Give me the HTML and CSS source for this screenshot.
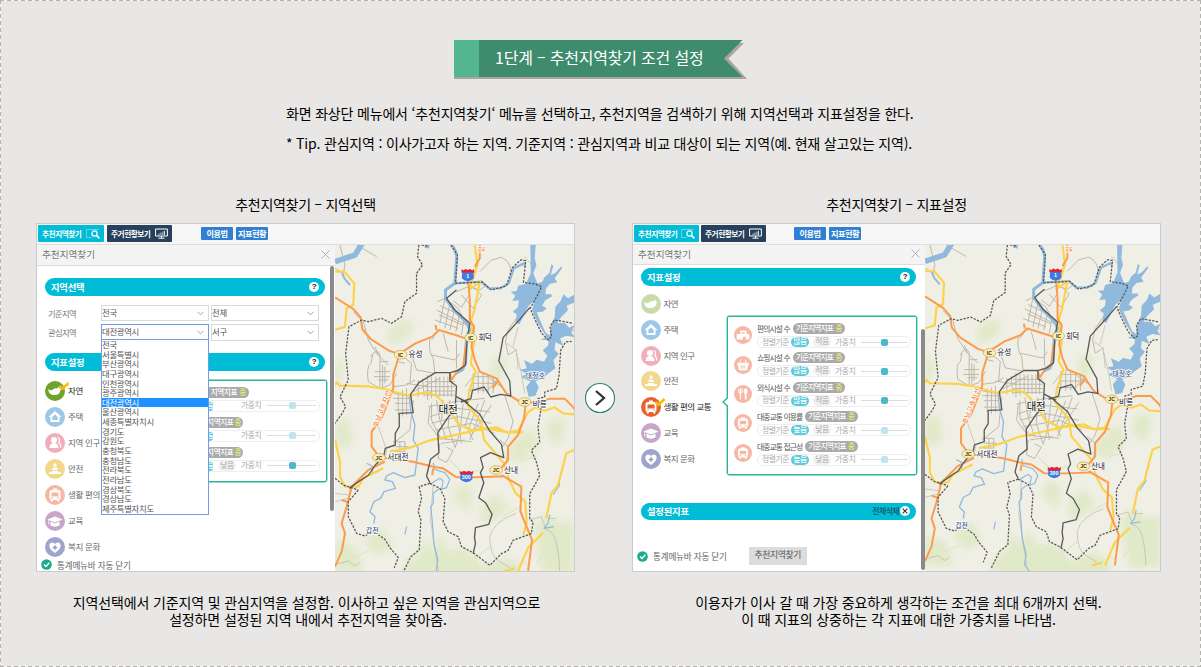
FILE: index.html
```html
<!DOCTYPE html>
<html lang="ko">
<head>
<meta charset="utf-8">
<title>추천지역찾기 조건 설정</title>
<link rel="stylesheet" href="styles.css">
</head>
<body>
<svg class="defs" width="0" height="0" aria-hidden="true">
  <defs>
    <filter id="soft" x="-20%" y="-20%" width="140%" height="140%"><feGaussianBlur stdDeviation="12"/></filter>
    <symbol id="nature" viewBox="0 0 20 20"><path d="M3.500 8c1.500 1.500 3 1.700 4.500.5C9 7.500 10.500 7 12 7.500l2.300-2.200.2 2.200 2.300.5-1.500 1.200c-.3 3.300-2.800 4.800-5.800 4.800C6 14 3 12 3.500 8z" fill="#fff"/></symbol>
    <symbol id="home" viewBox="0 0 20 20"><path d="M10 4l6.500 6h-2v5h-9v-5h-2z" fill="#fff"/><path d="M7.300 10L10 7.500l2.700 2.500v3H7.300z" fill="#9cc7e6"/></symbol>
    <symbol id="people" viewBox="0 0 20 20"><circle cx="9" cy="7" r="3" fill="#fff"/><path d="M4.500 15c0-3 1.500-5 4.500-5s4.500 2 4.500 5z" fill="#fff"/><path d="M12.500 4.500c3 .5 2 4 1.200 5 1.800 1 2 3 2 5" fill="none" stroke="#fff" stroke-width="1.200"/></symbol>
    <symbol id="safe" viewBox="0 0 20 20"><path d="M9 4.500h2l.8 3H8.200zM7.900 8.500h4.200l.7 2.500H7.200zM6.900 12h6.200l.3 1.300H16V15H4v-1.700h2.600z" fill="#fff"/></symbol>
    <symbol id="bus" viewBox="0 0 20 20"><path d="M6 5h8l1.500 1.500v7L14 15l.5 1.500h-2L12 15H8l-.5 1.500h-2L6 15l-1.500-1.500v-7zM6.500 7.500v4h7v-4zM8 3.500h4V5H8z" fill="#fff" fill-rule="evenodd"/><path d="M6 13h2M12 13h2" stroke="#f2a58c" stroke-width="1"/></symbol>
    <symbol id="edu" viewBox="0 0 20 20"><path d="M2.500 8.500L10 5.500l7.500 3L10 11.500z" fill="#fff"/><path d="M5.500 10.500v4c3 1.500 6 1.500 9 0v-4L10 12.500z" fill="#fff"/><path d="M3.800 9v4.500" stroke="#fff" stroke-width=".8"/></symbol>
    <symbol id="welfare" viewBox="0 0 20 20"><path d="M10 16C2 11 4 5.500 7 5.500c1.500 0 2.500.8 3 1.800.5-1 1.500-1.800 3-1.800 3 0 5 5.500-3 10.500z" fill="#fff"/><path d="M10 8.300v4.400M7.800 10.500h4.400" stroke="#8f93c6" stroke-width="1.300"/></symbol>
    <symbol id="store" viewBox="0 0 20 20"><path d="M3 9h4V5h7v4h3v6h-4v-3h-3v3H3zM8.500 7v1.500H12V7z" fill="#fff" fill-rule="evenodd"/></symbol>
    <symbol id="basket" viewBox="0 0 20 20"><path d="M4 8h12v1.800h-.7L14 15.500H6L4.700 9.800H4zM6 8l2-4M14 8l-2-4" fill="#fff" stroke="#fff"/><path d="M8 10.500V14M10 10.500V14M12 10.500V14" stroke="#f6b8a4"/></symbol>
    <symbol id="food" viewBox="0 0 20 20"><path d="M5.500 4v4.500M7.200 4v12M9 4v4.500M5.500 8.500H9" stroke="#fff" stroke-width="1.200" fill="none"/><path d="M13 3.500c2.500.5 2.500 5 .8 6.500V16h-1.800V10c-1.500-1.500-1.500-6 1-6.500z" fill="#fff"/></symbol>
    <symbol id="mark" viewBox="0 0 12 10"><path d="M1.500 3.800l3 3L10.500 1" fill="none" stroke="#fdbb05" stroke-width="2.600"/></symbol>
    <symbol id="ok" viewBox="0 0 11 11"><circle cx="5.500" cy="5.500" r="5.300" fill="#1dab8a"/><path d="M3 5.400l2 2 3.300-3.600" fill="none" stroke="#fff" stroke-width="1.400"/></symbol>
    <symbol id="find" viewBox="0 0 14 11"><path d="M5.500 9.500h-5v-8h12" fill="none" stroke="#b9eef6" stroke-width="1" stroke-dasharray="1 1"/><circle cx="8.500" cy="5.500" r="2.600" fill="none" stroke="#fff" stroke-width="1.200"/><path d="M10.400 7.400l3 3" stroke="#fff" stroke-width="1.500"/></symbol>
    <symbol id="monitor" viewBox="0 0 13 11"><path d="M.6 1h11.800v7H.6zM6.500 8v2M3.500 10.200h6" fill="none" stroke="#fff" stroke-width="1"/><path d="M4 7V5.500M6 7V4.500M8 7V3.500M9.500 7V2.800" stroke="#fff" stroke-width=".8"/></symbol>
    <symbol id="terrain" viewBox="15 15 718 1000" preserveAspectRatio="xMinYMin slice">
      <rect x="15" y="15" width="718" height="1000" fill="#f0efe6"/>
      <g fill="#dbe7be" filter="url(#soft)" opacity=".75">
        <path d="M170 270l40-25 40-5-10 45-60 35zM15 350l30 30-20 60-10 10zM15 550l40-20 15 70-30 30-25-20zM490 350l40 5-15 60-35 30zM550 600l60-40 20 60-60 50-40-20zM660 530l50 10-20 80-40-30zM15 900l60 20 30 73H15zM100 895l60-35 30 60-50 30zM220 980l60-50-10-50 40 50 20-50 30 60 40-20 60 60 70-30 50 30v73H220zM390 730l40 20-10 70-50-40zM610 860l40-40 40 30 43-10v160H640zM450 800l50-40 40 50-80 50z"/>
      </g>
      <g fill="none" stroke="#e0e9c9" stroke-width="5"><path d="M360 660l40 40 50-10M230 960l50-40 30 40 60-30 50 40 60-50M260 990l30-60M350 980l-20-60M450 1000l-20-70M620 970l40-60 60 40M680 1000l-20-90M30 920l50 30 40-20M560 620l20 40 40-10M520 830l50-30 20 60M660 560l30 30M30 570l30 40"/></g>

      <g fill="none" stroke="#bab3a6" stroke-width="2.800">
        <path d="M70 215l30 30 15 55 25 40 35 35M140 50l-60-35M15 85l25 15 5-25-15-60M122 350q20-30 28-5v20h25M128 345l-5 25q-15 10-8 55l35 20 30-10 20-35M150 365v80M135 320l10 25M158 375v65M165 380v50M135 395h45M132 410h48M145 420h30"/>
        <path d="M450 95l35-35 30-8q35 15 28 60M560 235l-25 35-8 35 8 40 25-15M380 155l35-15 35 10 20-15M395 165l35 40 25-40-25-25M370 182l25 20 22-35"/>
        <path d="M323 185l22-10 40 30 25 50M320 210l40 20 50 25M315 240l70 25M345 175l-15 75M360 190l-15 75M375 205l-15 65M390 220l-12 55M403 235l-8 50M330 197l65 30M328 225l70 30M300 295q-5 40 10 60l5 45M305 345l70 15 15-20M325 270l-20 30M340 280l15 55M380 300v85M245 345l15 45 55 10M220 350l25 20-5 60M205 365l20 5"/>
        <path d="M190 460l55 10M190 475h50M195 490h45M195 510h45M205 455v70M218 450v80M230 445v80M190 440l40-5 25-15M230 430l65 10M250 455l80-40M265 420v50M278 415l5 55M293 405v75M305 410v65M318 410v60M330 410v60M342 410v60M354 410v60M365 420v50M285 425h90M285 440h90M285 453h90M285 465h90"/>
        <path d="M295 500l80-15 90-10M300 530l80-25 100 10M305 550l80-20 100 20M315 570l110-20 70 30M325 595l100 10M335 610l70-10M305 490v50l30 60M320 480l10 60 20 60M340 480l-5 60M360 480l-5 80 20 60M375 490l10 60 10 60M400 490l-10 90-15 45M425 500l-20 60M445 490l-30 80 15 30M465 480l-45 120M485 495l-60 90M300 500l-5 50 30 40M330 610l-5 45 25 12 20-35-20-10M405 440l25-30h45l40 30M415 450h60l30-35M425 430h70M430 400v50M445 395v65M460 398v60M475 405v55M490 410v50M525 465l25 80-15 50-20 30M510 600l25 20-5 50M250 480l-10 90-50 40M190 605h35v30h-30M195 620h40M210 605v30"/>
        <path d="M310 730l-8 110 12 80 12 73M140 545l30 85-5 25M735 270l-60 20-30 45M565 260l-15 60M600 840l35-10 15 40q35 0 40 123M560 820q-70 25-80 70 0 60 30 75l30 18M15 760l45 5M15 785l40-10M15 973l40-10 20 15 15-10M655 835h25M585 50l25 30M560 340l15 60 10 60M530 310l30 20 5 60" stroke-width="2"/>
      </g>

      <g fill="none" stroke="#8fb9dd" stroke-linejoin="round">
        <path d="M365 15q18 20 15 45l-5 70-28 20 0 25 25 35 40 40 8 20-10 20-3 80-10 20-20 10" stroke-width="9"/>
        <path d="M15 65l60-20 25-40M285 15l14 2" stroke-width="17"/>
        <path d="M35 95l8 20 17 20" stroke-width="6"/>
        <path d="M375 130l80-5 22 20h35l25-15 15-45 30-15 5 10" stroke-width="7"/>
        <path d="M238 470l5 45 12 40-5 45 15 25-10 80-30 8-35-15-20 10-5 12 22 5 10 20-35 10-10 20-20 10-12 30 15 15-3 20" stroke-width="4"/>
        <path d="M305 730l25-15 10 8-5 25 15-5 10-25-15-20-30-10-5-20M330 745l-20 15v30l-8 10 5 40 5 70 12 50-5 30 22 30M110 670l20 10-5 25M230 860l-5 23M700 685q-15 40-10 50l-20 30M660 825l-5 25-12 15 30-5" stroke-width="3.500"/>
      </g>
      <path transform="translate(375 15)" fill="#8fb9dd" d="M227 0L243 0 240 40 245 60 236 85 248 115 262 112 270 96 284 84 290 58 296 62 288 90 302 84 320 64 322 70 300 100 308 112 286 116 274 130 272 148 290 148 292 154 272 166 262 182 276 190 264 200 246 202 258 230 272 262 284 272 290 240 300 215 302 185 318 168 326 148 340 160 360 148 360 172 336 182 340 196 320 215 308 234 330 234 344 248 360 240 350 262 360 276 335 272 316 280 326 302 302 292 300 315 312 326 296 346 302 370 280 386 262 402 242 408 252 426 242 452 222 456 214 425 228 410 200 396 214 386 196 374 216 370 208 346 232 356 246 344 268 350 278 332 264 316 280 302 282 286 258 284 276 276 250 236 232 195 240 166 222 182 210 204 202 222 194 238 182 232 186 208 174 200 190 186 192 166 172 168 182 152 168 140 186 138 190 122 214 116 228 84z"/>

      <g fill="none" stroke="#fcd249" stroke-width="6.500" stroke-linejoin="round">
        <path d="M15 270l30-10 5-55 20-10 3-65-30-35H15M15 435l5-8 10 10 85 2 50 8 40 12 35 8 50-10 30 10 30 30 35 55 45 20 70-10 30 15 50 0"/>
        <path d="M435 15l8 60-25 75 32-25-15 80-12 40 10 60-10 65 15 25-20 60-5 40 40 50 10 55 60 70 15 50 20 40 28 25 5 60-10 40M180 635l60-12 60-22 70-15 55-12 35-10 30 5 45 8 30-5 30-55 20-15 30 10 30-10 25 18 33 3M15 600l15 65 0 45 15 30 40 0 15-25 60-30M733 630l-23 10-25 95-20 25-15 75M640 878l-45 45-30 70M555 985l-30 8"/>
      </g>
      <g fill="none" stroke="#fb9b4c" stroke-width="6" stroke-linejoin="round">
        <path d="M15 172l55 35 22 25 5 35 25 30 55 35 30 10 50-32 50-20 20-20 50 15 30 10M320 270l-3-15M450 15v40l-15 25M415 120l5 60 0 60 13 20-8 60 10 40 15 35 50 20 30 45 45 28 55-2 30-10h45l25 25 18 30M205 355l-15 50 0 40-35 90-30 40v45l25 33M165 655l85 10 60 15 30 5 40 27h65l80-3M515 705l60 35-3 75 35 85-12 93M588 490l-5 45-18 50-30 35 0 40-30 35M165 665l-50 25-50 50-15 60-15 50 10 30-10 55-20 45M35 780l20 7M310 685l-3 20M360 400l5 20 20-30 15-10 8-65M488 445l15-20"/>
      </g>
      <g fill="none" stroke="#fdbf8e" stroke-width="2"><path d="M575 960l25 20M575 730l-8 15"/></g>
      <g fill="none" stroke="#59595b" stroke-width="4" stroke-linejoin="round">
        <path d="M300 728l-10-20 12-50 25-20-3-60 30-45 22-25 4-70-20-15v-23M380 150l-30 25 25 35 45 40-8 50-5 75-20 15-25 8-45 0-50 30-25 35 8 55-42 2v40l-12 20 0 35-30 10-5 25-25 25-20 30-30 20-28 20M380 470l25 15 45 38 30 50 35 40 7 40-40-15-30 15 8 30-8 15 10 30-15 45 20 15 20 35-10 30-40 10-3 30 3 18-7 30M600 203l-30 35-50 55-8 45-5 25 33 60 3 45-30-5-30 8-20-30-35 10-5 25-30 10M385 473l30 15"/>
      </g>
      <g fill="none" stroke="#565657" stroke-width="3.800" stroke-dasharray="7 4" stroke-linejoin="round">
        <path d="M267 15l-4 35 15 25-18 25v60l-35 25-10 45-30 20-30-15-40 10-20-5-38 20-10 80 8 80-15 30-10 20 17 30-10 20-22 30M275 15l20 3M15 715l25 20 45 15M85 750l-30 35 0 45 25 50 25 8 25-15 35 25 15 25 25 30-12 30M300 730l-32 10 7 35-10 40 8 25-5 90-25 20-25 50M300 730l30 15 15 30-5 70 15 30 30 15 10 30 35 18M430 938l50 38 35-35 20-10 15-30 55-20 5-35-10-10 0-75 20-35 10-20-10-40-15-35 25-25-5-45 10-60-10-25 20-5 0-15 35-10 8-40 5-75 15-25 18-2M363 15l20 30-6 85 80-4 28 24 45-12 18-55 25-23 15 2-7 65 35 5 20 8-15 30-20 35 20 45 15 30 20 20 10-10-5-30 13-20 30 5 25 5"/>
      </g>
      <g fill="#ffedac" stroke="#b6a25d" stroke-width="2"><ellipse cx="423" cy="293" rx="18" ry="13"/><ellipse cx="212" cy="344" rx="19" ry="13"/><ellipse cx="585" cy="486" rx="19" ry="13"/><ellipse cx="147" cy="653" rx="19" ry="13"/><ellipse cx="499" cy="690" rx="19" ry="13"/></g>
      <g><path d="M397 97h34l1 18q-6 7-18 9-12-2-18-9z" fill="#3a7ce4"/><path d="M395 88l6 3 6-4 7 3 7-3 6 4 6-3v10h-38z" fill="#db2637"/><path d="M392 702h35l1 16q-6 7-18 9-13-2-19-9z" fill="#3a7ce4"/><path d="M390 693l6 3 6-4 8 3 8-3 6 4 6-3v10h-40z" fill="#db2637"/></g>
    </symbol>
  </defs>
</svg>

<main class="guide">
  <h1 class="ribbon">
    <svg class="ribbon-shape" viewBox="0 0 293 39" width="293" height="39"><path d="M0 3h290l-15.500 15.500L293 39H0z" fill="#aaa5a4"/><path d="M0 0h288.500L270 18.500 288.500 37H0z" fill="#3f8b6d"/><path d="M0 0h25v37H0z" fill="#53b591"/></svg>
    <span class="ribbon-text">1단계 – 추천지역찾기 조건 설정</span>
  </h1>
  <div class="intro">
    <p>화면 좌상단 메뉴에서 ‘추천지역찾기‘ 메뉴를 선택하고, 추천지역을 검색하기 위해 지역선택과 지표설정을 한다.</p>
    <p class="tip">* Tip. 관심지역 : 이사가고자 하는 지역. 기준지역 : 관심지역과 비교 대상이 되는 지역(예. 현재 살고있는 지역).</p>
  </div>

  <div class="steps">
    <section class="step step-a">
      <h2>추천지역찾기 – 지역선택</h2>
      <div class="shot">
        <div class="topbar">
          <span class="tool teal">추천지역찾기<svg width="14" height="11"><use href="#find"/></svg></span>
          <span class="tool navy">주거현황보기<svg width="13" height="11"><use href="#monitor"/></svg></span>
          <span class="link first">이용법</span><span class="link">지표현황</span>
        </div>
        <div class="work">
          <div class="side">
            <div class="side-head"><span>추천지역찾기</span><svg width="9" height="9" viewBox="0 0 9 9"><path d="M.5.5l8 8M8.500.5l-8 8" stroke="#aaa" stroke-width=".9"/></svg></div>
            <div class="side-body">
              <div class="bar"><b>지역선택</b><i class="q">?</i></div>
              <div class="fields">
                <div class="field"><label>기준지역</label><span class="select">전국<svg class="chev" viewBox="0 0 7 5"><path d="M.5.8l3 3 3-3"/></svg></span><span class="select">전체<svg class="chev" viewBox="0 0 7 5"><path d="M.5.8l3 3 3-3"/></svg></span></div>
                <div class="field"><label>관심지역</label><span class="select open">대전광역시<svg class="chev" viewBox="0 0 7 5"><path d="M.5.8l3 3 3-3"/></svg>
                  <span class="menu"><span>전국</span><span>서울특별시</span><span>부산광역시</span><span>대구광역시</span><span>인천광역시</span><span>광주광역시</span><span class="on">대전광역시</span><span>울산광역시</span><span>세종특별자치시</span><span>경기도</span><span>강원도</span><span>충청북도</span><span>충청남도</span><span>전라북도</span><span>전라남도</span><span>경상북도</span><span>경상남도</span><span>제주특별자치도</span></span>
                </span><span class="select">서구<svg class="chev" viewBox="0 0 7 5"><path d="M.5.8l3 3 3-3"/></svg></span></div>
              </div>
              <div class="bar second"><b>지표설정</b><i class="q">?</i></div>
              <div class="picker">
                <ul class="cats">
                  <li class="active"><svg class="ic nature on"><use href="#nature"/></svg><svg class="tick"><use href="#mark"/></svg>자연</li>
                  <li><svg class="ic home"><use href="#home"/></svg>주택</li>
                  <li><svg class="ic people"><use href="#people"/></svg>지역 인구</li>
                  <li><svg class="ic safe"><use href="#safe"/></svg>안전</li>
                  <li><svg class="ic bus"><use href="#bus"/></svg>생활 편의</li>
                  <li><svg class="ic edu"><use href="#edu"/></svg>교육</li>
                  <li><svg class="ic welfare"><use href="#welfare"/></svg>복지 문화</li>
                </ul>
                <div class="box">
                  <div class="ind"><span class="badge">지역지표 <em>중</em></span><div class="opts"><span class="chip on">음</span><span class="chip"></span><span>가중치</span><span class="slider pale"></span></div></div>
                  <div class="ind"><span class="badge short">지역지표 <em>중</em></span><div class="opts"><span class="chip on">음</span><span class="chip"></span><span>가중치</span><span class="slider pale"></span></div></div>
                  <div class="ind"><span class="badge short">지역지표 <em>중</em></span><div class="opts"><span class="chip on">음</span><span class="chip">낮음</span><span>가중치</span><span class="slider"></span></div></div>
                </div>
              </div>
              <div class="auto"><svg width="11" height="11"><use href="#ok"/></svg>통계메뉴바 자동 닫기</div>
            </div>
            <span class="thumb"></span>
          </div>
          <svg class="map" viewBox="15 15 718 978" preserveAspectRatio="none">
            <use href="#terrain" x="15" y="15" width="718" height="1000"/>
            <g class="names">
              <text x="446" y="301" textLength="40">회덕</text><text x="236" y="352" textLength="42">유성</text><text x="608" y="502" textLength="43">비룡</text><text x="172" y="661" textLength="64">서대전</text><text x="523" y="700" textLength="42">산내</text>
              <text class="city" x="326" y="518" textLength="58">대전</text><text class="water" x="588" y="415" textLength="58">대청호</text><text class="water" x="108" y="880" textLength="38">갑천</text>
              <text class="road" transform="translate(142 563) rotate(-69)" textLength="115">호남고속지선</text><text class="road top" x="443" y="34" textLength="24">경부</text>
              <text class="jc" x="415" y="299">IC</text><text class="jc" x="204" y="350">IC</text><text class="jc" x="575" y="492">JC</text><text class="jc" x="137" y="659">JC</text><text class="jc" x="489" y="696">JC</text>
              <text class="no" x="409" y="113">1</text><text class="no" x="396" y="718">300</text>
            </g>
          </svg>
        </div>
      </div>
      <p class="caption">지역선택에서 기준지역 및 관심지역을 설정함. 이사하고 싶은 지역을 관심지역으로<br><span>설정하면 설정된 지역 내에서 추전지역을 찾아줌.</span></p>
    </section>

    <svg class="next" width="32" height="32" viewBox="0 0 32 32"><circle cx="16" cy="16" r="14.500" fill="#fff" stroke="#2a8668" stroke-width="1.100"/><path d="M12 9l8 7-8 7" fill="none" stroke="#333" stroke-width="2.300"/></svg>

    <section class="step step-b">
      <h2>추천지역찾기 – 지표설정</h2>
      <div class="shot">
        <div class="topbar">
          <span class="tool teal">추천지역찾기<svg width="14" height="11"><use href="#find"/></svg></span>
          <span class="tool navy">주거현황보기<svg width="13" height="11"><use href="#monitor"/></svg></span>
          <span class="link first">이용법</span><span class="link">지표현황</span>
        </div>
        <div class="work">
          <div class="side">
            <div class="side-head"><span>추천지역찾기</span><svg width="9" height="9" viewBox="0 0 9 9"><path d="M.5.5l8 8M8.500.5l-8 8" stroke="#aaa" stroke-width=".9"/></svg></div>
            <div class="side-body">
              <div class="bar"><b>지표설정</b><i class="q">?</i></div>
              <div class="picker">
                <ul class="cats">
                  <li><svg class="ic nature"><use href="#nature"/></svg>자연</li>
                  <li><svg class="ic home"><use href="#home"/></svg>주택</li>
                  <li><svg class="ic people"><use href="#people"/></svg>지역 인구</li>
                  <li><svg class="ic safe"><use href="#safe"/></svg>안전</li>
                  <li class="active"><svg class="ic bus on"><use href="#bus"/></svg><svg class="tick"><use href="#mark"/></svg>생활 편의 교통</li>
                  <li><svg class="ic edu"><use href="#edu"/></svg>교육</li>
                  <li><svg class="ic welfare"><use href="#welfare"/></svg>복지 문화</li>
                </ul>
                <div class="box">
                  <svg class="notch" width="6" height="10" viewBox="0 0 6 10"><path d="M6 .5L1 5l5 4.500" fill="#fff" stroke="#2bb596" stroke-width="1.400"/></svg>
                  <div class="row"><svg class="ic bus"><use href="#store"/></svg><div class="ind"><div class="name">편의시설 수<span class="badge">기준지역지표 <em>중</em></span></div><div class="opts"><span>정렬기준</span><span class="chip on">많음</span><span class="chip">적음</span><span>가중치</span><span class="slider"></span></div></div></div>
                  <div class="row"><svg class="ic bus"><use href="#basket"/></svg><div class="ind"><div class="name">쇼핑시설 수<span class="badge">기준지역지표 <em>중</em></span></div><div class="opts"><span>정렬기준</span><span class="chip on">많음</span><span class="chip">적음</span><span>가중치</span><span class="slider"></span></div></div></div>
                  <div class="row"><svg class="ic bus"><use href="#food"/></svg><div class="ind"><div class="name">외식시설 수<span class="badge">기준지역지표 <em>중</em></span></div><div class="opts"><span>정렬기준</span><span class="chip on">많음</span><span class="chip">적음</span><span>가중치</span><span class="slider"></span></div></div></div>
                  <div class="row"><svg class="ic bus"><use href="#bus"/></svg><div class="ind"><div class="name">대중교통 이용률<span class="badge">기준지역지표 <em>중</em></span></div><div class="opts"><span>정렬기준</span><span class="chip on">높음</span><span class="chip">낮음</span><span>가중치</span><span class="slider pale"></span></div></div></div>
                  <div class="row"><svg class="ic bus"><use href="#bus"/></svg><div class="ind"><div class="name">대중교통 접근성<span class="badge">기준지역지표 <em>중</em></span></div><div class="opts"><span>정렬기준</span><span class="chip on">높음</span><span class="chip">낮음</span><span>가중치</span><span class="slider pale"></span></div></div></div>
                </div>
              </div>
              <div class="bar chosen"><b>설정된지표</b><span class="clear">전체삭제<i class="q x"><svg width="6" height="6" viewBox="0 0 6 6"><path d="M.7.7l4.600 4.600M5.300.7L.7 5.300" stroke="#333" stroke-width="1.100"/></svg></i></span></div>
              <div class="auto"><svg width="11" height="11"><use href="#ok"/></svg>통계메뉴바 자동 닫기<span class="go">추천지역찾기</span></div>
            </div>
            <span class="thumb"></span>
          </div>
          <svg class="map" viewBox="15 15 718 995" preserveAspectRatio="none">
            <use href="#terrain" x="15" y="15" width="718" height="1000"/>
            <g class="names">
              <text x="446" y="301" textLength="40">회덕</text><text x="236" y="352" textLength="42">유성</text><text x="608" y="502" textLength="43">비룡</text><text x="172" y="661" textLength="64">서대전</text><text x="523" y="700" textLength="42">산내</text>
              <text class="city" x="326" y="518" textLength="58">대전</text><text class="water" x="588" y="415" textLength="58">대청호</text><text class="water" x="108" y="880" textLength="38">갑천</text>
              <text class="road" transform="translate(142 563) rotate(-69)" textLength="115">호남고속지선</text><text class="road top" x="443" y="34" textLength="24">경부</text>
              <text class="jc" x="415" y="299">IC</text><text class="jc" x="204" y="350">IC</text><text class="jc" x="575" y="492">JC</text><text class="jc" x="137" y="659">JC</text><text class="jc" x="489" y="696">JC</text>
              <text class="no" x="409" y="113">1</text><text class="no" x="396" y="718">300</text>
            </g>
          </svg>
        </div>
      </div>
      <p class="caption">이용자가 이사 갈 때 가장 중요하게 생각하는 조건을 최대 6개까지 선택.<br>이 때 지표의 상중하는 각 지표에 대한 가중치를 나타냄.</p>
    </section>
  </div>
</main>
</body>
</html>
```

FILE: styles.css
```css
* { box-sizing: border-box; }
body { margin: 0; font-family: "Noto Sans CJK KR", "Noto Sans", sans-serif; color: #111; background: #e8e7e5; }
p, h1, h2, ul { margin: 0; padding: 0; font-weight: 400; }
i, em { font-style: normal; }
svg { display: block; flex: none; }
.defs { position: absolute; }

.guide {
  width: 1201px; height: 667px; padding-top: 40px; overflow: hidden;
  background:
    repeating-linear-gradient(90deg, #b5b3b1 0 4px, #f6f6f5 4px 7px) 0 0 / 100% 1px no-repeat,
    repeating-linear-gradient(90deg, #b5b3b1 0 4px, #f6f6f5 4px 7px) 0 100% / 100% 1px no-repeat,
    repeating-linear-gradient(180deg, #b5b3b1 0 4px, #f6f6f5 4px 7px) 0 0 / 1px 100% no-repeat,
    repeating-linear-gradient(180deg, #b5b3b1 0 4px, #f6f6f5 4px 7px) 100% 0 / 1px 100% no-repeat,
    #e8e7e5;
}
.ribbon { position: relative; width: 293px; height: 39px; margin-left: 454px; }
.ribbon-text { position: absolute; left: 41px; top: 0; line-height: 35px; font-size: 16px; letter-spacing: -.2px; color: #fff; white-space: nowrap; }
.intro { margin: 19px 0 0 286px; font-size: 14px; line-height: 30px; letter-spacing: -.18px; white-space: nowrap; color: #000; }

.steps { display: flex; margin-top: 36px; padding-left: 36px; }
.step h2 { font-size: 14px; line-height: 20px; height: 29px; text-align: center; letter-spacing: -.27px; white-space: nowrap; color: #000; }
.step-a { width: 539px; }
.step-b { width: 529px; }
.next { margin: 188px 16px 0 9px; }
.caption { margin-top: 22px; font-size: 14px; line-height: 17px; text-align: center; letter-spacing: -.13px; white-space: nowrap; color: #000; }
.step-a .caption { padding-left: 2px; }
.caption span { padding-left: 3px; }
.step-b .caption { padding-left: 4px; }

.shot { height: 349px; border: 1px solid #cbcbcb; background: #fff; overflow: hidden; }
.topbar { display: flex; height: 21px; padding: 1px 0 0 1px; background: #f6f6f6; border-bottom: 1px solid #dedede; font-size: 7.700px; font-weight: 700; color: #fff; white-space: nowrap; letter-spacing: -.5px; }
.tool { display: flex; align-items: center; justify-content: space-between; width: 66px; height: 17px; margin-right: 3px; padding: 0 4px; border-radius: 1px; }
.teal { background: #00bcd6; }
.navy { background: #27405c; width: 65px; }
.link { height: 13px; margin: 2px 3px 0 0; width: 32px; line-height: 12px; border-radius: 1px; background: #2f80d3; text-align: center; font-size: 8.200px; }
.link.first { margin-left: 26px; }
.step-b .tool { width: 64.500px; margin-right: 2.500px; }
.work { display: flex; height: 326px; }
.side { position: relative; width: 298px; flex: none; }
.step-b .side { width: 292px; }
.side-head { display: flex; align-items: center; justify-content: space-between; height: 21px; padding: 0 5px 2px; background: #f4f4f4; border-bottom: 1px solid #ddd; font-size: 9.600px; line-height: 14px; color: #777; }
.thumb { position: absolute; left: 293px; top: 21px; width: 4px; height: 245px; border-radius: 2px; background: #8a8a8a; }
.side-body { padding: 12px 8px 0; }
.bar { display: flex; align-items: center; justify-content: space-between; width: 280px; height: 17.500px; padding: 0 6px; border-radius: 9px; background: #00bcd6; color: #fff; font-size: 9.300px; line-height: 14px; letter-spacing: -.2px; }
.q { display: flex; align-items: center; justify-content: center; width: 10px; height: 10px; border-radius: 50%; background: #fff; color: #111; font: 700 8px/10px "Liberation Sans", sans-serif; }
.fields { display: grid; gap: 3px; padding: 9px 0 0 3px; }
.field { display: flex; gap: 2px; height: 16.500px; font-size: 8.400px; color: #555; line-height: 15px; }
.field label { width: 51px; padding-top: 1px; letter-spacing: -.6px; font-size: 8.300px; color: #777; }
.select { position: relative; width: 108px; height: 16.500px; border: 1px solid #d9d9d9; background: #fff; padding-left: 0; line-height: 12px; letter-spacing: -.3px; }
.select.open { border-color: #709be6; }
.chev { position: absolute; right: 4px; top: 5px; width: 7px; height: 5px; fill: none; stroke: #999; stroke-width: .9; }
.menu { position: absolute; z-index: 2; left: -1px; top: 14px; width: 108px; height: 176px; border: 1px solid #709be6; background: #fff; display: grid; grid-template-rows: repeat(18, 9.650px); }
.menu span { line-height: 8px; height: 9.650px; }
.menu .on { background: #1e90ff; color: #fff; }
.second { margin-top: 12.500px; }
.picker { display: flex; margin-top: 10px; }
.cats { list-style: none; width: 95px; flex: none; }
.cats li { position: relative; display: flex; align-items: flex-start; gap: 3px; height: 20px; margin-bottom: 6.100px; font-size: 8.500px; line-height: 18px; color: #666; letter-spacing: -.35px; white-space: nowrap; }
.cats .active { color: #222; }
.ic { width: 20px; height: 20px; border-radius: 50%; }
.tick { position: absolute; left: 13px; top: 1px; width: 12px; height: 10px; }
.nature { background: #c7dbab; } .nature.on { background: #6fa32b; }
.home { background: #9cc7e6; }
.people { background: #f2adbb; }
.safe { background: #f3d78c; }
.bus { background: #f6b8a4; } .bus.on { background: #e6622e; }
.edu { background: #c6a7c7; }
.welfare { background: #9fa4cf; }
.box { position: relative; border: 1.500px solid #2bb596; border-radius: 2px; box-shadow: 0 0 0 .4px #2bb596; }
.step-a .box { width: 187px; height: 102px; margin-top: -1px; padding: 6px 6px 0 64px; }
.step-a .ind { height: 30px; }
.badge { display: inline-flex; gap: 1px; align-items: center; height: 11px; padding: 0 2px 1px 3px; border-radius: 6px; background: #aaa; color: #fff; font-size: 7.600px; font-weight: 500; line-height: 10px; letter-spacing: -.75px; white-space: nowrap; }
.badge em { width: 9px; color: #e7ed6b; text-align: center; }
.step-a .ind > .badge { display: flex; width: 44px; justify-content: flex-end; letter-spacing: -.4px; }
.step-a .ind > .badge.short { width: 38px; }
.opts { display: flex; align-items: center; height: 12px; border: 1px solid #eee; border-radius: 6px; font-size: 7.800px; line-height: 8px; color: #aaa; letter-spacing: -.4px; white-space: nowrap; }
.opts > span:not(.slider) { padding-bottom: 1px; }
.chip { height: 10px; border-radius: 5px; background: #f1f1f1; line-height: 8px; text-align: center; }
.chip.on { background: #5cc9dc; color: #fff; font-weight: 500; }
.step-a .opts { margin-top: 2px; }
.step-a .chip.on { width: 7px; text-align: right; }
.step-a .chip { width: 18px; margin-right: 5px; }
.step-a .chip:empty { background: none; }
.slider { position: relative; width: 49px; height: 1px; margin-left: 6px; background: #ddd; }
.slider::after { content: ""; position: absolute; left: 22px; top: -3px; width: 7px; height: 7px; border-radius: 2px; background: #4db8c6; }
.slider.pale::after { background: #bfe5ea; }
.auto { display: flex; align-items: center; gap: 5px; height: 12px; margin: 7px 0 0 -4px; font-size: 8.600px; color: #666; letter-spacing: -.2px; }
.step-a .picker { height: 171px; }

.step-b .side-head { height: 20px; }
.step-b .side-body { padding-top: 3px; }
.step-b .bar { width: 275px; }
.step-b .picker { height: 208.500px; margin-top: 8.500px; }
.step-b .cats { width: 86px; }
.step-b .cats li { gap: 2.500px; margin-bottom: 5.800px; letter-spacing: -.5px; }
.step-b .box { width: 190px; height: 159px; margin-top: 22px; padding: 6px 5px 0 6px; }
.notch { position: absolute; left: -6px; top: 80px; }
.row { display: flex; align-items: center; gap: 5px; height: 29.400px; }
.row .ic { width: 18px; height: 18px; margin-top: -5px; }
.row .ind { flex: 1; height: 100%; }
.name { display: flex; align-items: center; gap: 3px; height: 11px; font-size: 7.800px; letter-spacing: -.9px; color: #555; white-space: nowrap; }
.row .opts { margin-top: 2px; padding-left: 4px; }
.row .chip { width: 18px; margin: 0 4px 0 0; }
.row .chip.on { margin: 0 4px 0 2px; }
.row .slider { width: 47px; }
.row .slider::after { left: 20px; }
.clear { display: flex; align-items: center; gap: 1px; color: #234; font-size: 8px; letter-spacing: -.7px; }
.step-b .auto { height: 18px; margin-top: 27px; }
.go { width: 58px; height: 18px; margin-left: 17px; background: #dcdcdc; text-align: center; line-height: 16px; font-size: 8.800px; letter-spacing: -.3px; color: #555; }
.step-b .thumb { left: 288px; top: 84px; width: 3.500px; height: 241px; }

.map { width: 239px; height: 326px; flex: none; }
.step-b .map { width: 235px; }
.names { font-size: 23px; fill: #4a4a58; stroke: #fff; stroke-width: 4px; paint-order: stroke; }
.names text { font-weight: 500; }
.names .city { font-size: 32px; fill: #333; }
.names .water { font-size: 20px; fill: #3b5488; }
.names .road { font-size: 20px; fill: #f0803c; }
.names .top { font-size: 14px; }
.names .jc { font: 700 16px "Liberation Sans", sans-serif; stroke: none; fill: #333; }
.names .no { font: 700 16px "Liberation Sans", sans-serif; stroke: none; fill: #fff; }
```
